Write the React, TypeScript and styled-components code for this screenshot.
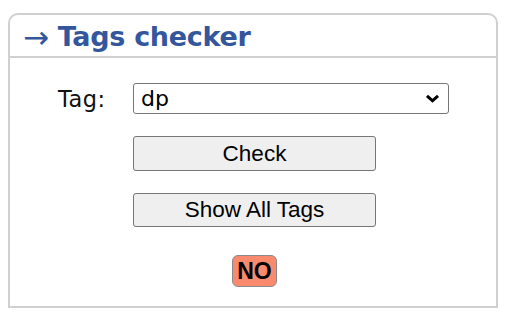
import styled, { createGlobalStyle } from "styled-components";

const GlobalStyle = createGlobalStyle`
  html, body {
    margin: 0;
    padding: 0;
    background: #ffffff;
  }
  #root {
    padding: 13px 0 0 8px;
  }
`;

const Panel = styled.section`
  width: 490px;
  height: 295px;
  box-sizing: border-box;
  border: 2px solid #d0d0d0;
  border-radius: 10px 10px 0 0;
  display: flex;
  flex-direction: column;
`;

const Header = styled.h2`
  margin: 0;
  height: 43px;
  box-sizing: border-box;
  padding: 1px 0 0 13px;
  display: flex;
  align-items: center;
  border-bottom: 2px solid #d0d0d0;
  font-family: "DejaVu Sans", Verdana, sans-serif;
  font-weight: bold;
  font-size: 27px;
  line-height: 1;
  color: #34569c;
  letter-spacing: -0.3px;
`;

const Arrow = styled.span`
  font-weight: normal;
  margin-right: 9px;
  font-size: 31px;
  line-height: 1;
  transform: translateY(1px);
`;

const Body = styled.div`
  flex: 1;
  display: flex;
  flex-direction: column;
  align-items: center;
  padding: 25px 0 0 3px;
`;

const FieldRow = styled.div`
  align-self: stretch;
  display: flex;
  align-items: center;
  padding-left: 45px;
  height: 31px;
`;

const Label = styled.label`
  width: 75px;
  font-family: "DejaVu Sans", Verdana, sans-serif;
  font-size: 22.5px;
  color: #111;
  letter-spacing: 0.5px;
`;

const SelectWrap = styled.div`
  position: relative;
  width: 316px;
  height: 31px;
`;

const Select = styled.select`
  appearance: none;
  width: 100%;
  height: 100%;
  box-sizing: border-box;
  border: 1px solid #767676;
  border-radius: 3px;
  background: #fff;
  padding: 0 30px 0 7px;
  font-family: "DejaVu Sans", Verdana, sans-serif;
  font-size: 22px;
  color: #000;
`;

const Chevron = styled.svg`
  position: absolute;
  right: 9px;
  top: 11px;
  pointer-events: none;
`;

const Button = styled.button<{ $top: number; $h: number }>`
  margin-top: ${(p) => p.$top}px;
  width: 243px;
  height: ${(p) => p.$h}px;
  box-sizing: border-box;
  border: 1px solid #767676;
  border-radius: 3px;
  background: #efefef;
  font-family: "Liberation Sans", Arial, sans-serif;
  font-size: 22.5px;
  color: #000;
  padding: 0;
`;

const Badge = styled.span`
  margin-top: 28px;
  width: 45px;
  height: 32px;
  box-sizing: border-box;
  display: flex;
  align-items: center;
  justify-content: center;
  background: #fa8a6e;
  border: 1px solid #8a8a8a;
  border-radius: 6px;
  font-family: "Liberation Sans", Arial, sans-serif;
  font-weight: bold;
  font-size: 23px;
  color: #000;
`;

export default function App() {
  return (
    <>
      <GlobalStyle />
      <Panel>
        <Header>
          <Arrow>→</Arrow>Tags checker
        </Header>
        <Body>
          <FieldRow>
            <Label htmlFor="tag">Tag:</Label>
            <SelectWrap>
              <Select id="tag" defaultValue="dp">
                <option value="dp">dp</option>
              </Select>
              <Chevron width="15" height="9" viewBox="0 0 15 9">
                <path d="M2 1.8 L7.5 6.8 L13 1.8" fill="none" stroke="#000" strokeWidth="3" />
              </Chevron>
            </SelectWrap>
          </FieldRow>
          <Button $top={22} $h={35}>Check</Button>
          <Button $top={22} $h={34}>Show All Tags</Button>
          <Badge>NO</Badge>
        </Body>
      </Panel>
    </>
  );
}
